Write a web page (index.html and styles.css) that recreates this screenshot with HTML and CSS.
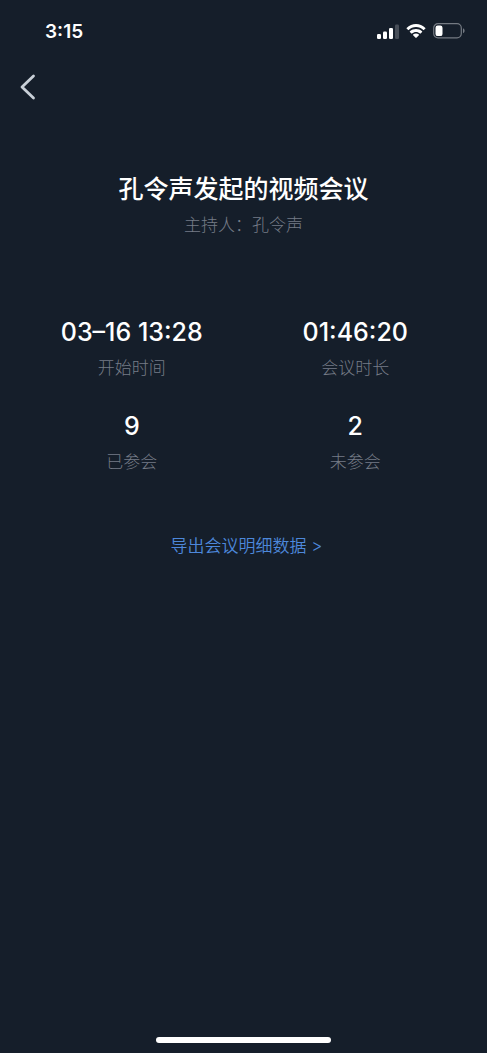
FILE: index.html
```html
<!DOCTYPE html>
<html lang="zh-CN">
<head>
<meta charset="utf-8">
<meta name="viewport" content="width=device-width, initial-scale=1">
<title>孔令声发起的视频会议</title>
<link rel="stylesheet" href="styles.css">
</head>
<body>
<div class="screen">
  <header class="status-bar">
    <time class="clock">3:15</time>
    <div class="status-icons">
      <svg class="icon-signal" viewBox="0 0 22 15" aria-hidden="true">
        <rect x="0" y="10" width="4" height="5" rx="1.2"/>
        <rect x="6" y="7.500" width="4" height="7.500" rx="1.2"/>
        <rect x="12" y="4" width="4" height="11" rx="1.2"/>
        <rect class="dim" x="18" y="0.5" width="4" height="14.5" rx="1.2"/>
      </svg>
      <svg class="icon-wifi" viewBox="0 0 20 15" aria-hidden="true">
        <path d="M10 3.1c2.8 0 5.400 1.100 7.300 3 .2.200.4.200.6 0l1.500-1.500c.2-.2.2-.5 0-.7C14.200-1.200 5.800-1.200.600 3.900c-.2.200-.2.500 0 .7l1.500 1.500c.2.200.4.200.6 0 1.900-1.900 4.500-3 7.300-3z"/>
        <path d="M10 7.900c1.500 0 2.900.6 4 1.600.2.200.4.200.6 0l1.500-1.500c.2-.2.2-.5 0-.7-3.400-3.200-8.800-3.200-12.200 0-.2.200-.2.500 0 .7l1.500 1.500c.2.200.4.200.6 0 1.100-1 2.500-1.600 4-1.600z"/>
        <path d="M12.900 11.200c.2-.2.2-.5 0-.6-1.700-1.500-4.100-1.500-5.800 0-.2.100-.2.400 0 .6l2.500 2.600c.2.200.6.200.8 0z"/>
      </svg>
      <svg class="icon-battery" viewBox="0 0 32 16" aria-hidden="true">
        <rect class="shell" x="0.7" y="0.7" width="27.600" height="14.200" rx="4.300"/>
        <rect x="2.500" y="2.500" width="7" height="10.600" rx="2.200"/>
        <path class="cap" d="M30 5.300c1 .4 1.600 1.400 1.600 2.500S31 9.900 30 10.300z"/>
      </svg>
    </div>
  </header>

  <nav class="nav-bar">
    <button class="back" type="button" aria-label="返回">
      <svg class="icon-back" viewBox="0 0 16 26" aria-hidden="true"><path d="M13.500 2L2 13l11.500 11"/></svg>
    </button>
  </nav>

  <main class="content">
    <h1 class="title">孔令声发起的视频会议</h1>
    <p class="host">主持人：孔令声</p>
    <dl class="stats">
      <div class="stat"><dt class="label">开始时间</dt><dd class="value">03–16 13:28</dd></div>
      <div class="stat"><dt class="label">会议时长</dt><dd class="value">01:46:20</dd></div>
      <div class="stat"><dt class="label">已参会</dt><dd class="value">9</dd></div>
      <div class="stat"><dt class="label">未参会</dt><dd class="value">2</dd></div>
    </dl>
    <a class="export" href="#">导出会议明细数据 &gt;</a>
  </main>

  <footer class="home-area"><div class="home-indicator"></div></footer>
</div>
</body>
</html>
```
FILE: styles.css
```css
* {
  box-sizing: border-box;
}

body {
  margin: 0;
  background: #151e2a;
  color: #fff;
  font-family: Inter, "Noto Sans CJK SC", sans-serif;
}

.screen {
  display: flex;
  flex-direction: column;
  min-height: 100vh;
}

.status-bar {
  display: flex;
  align-items: center;
  justify-content: space-between;
  height: 62px;
  padding: 0 22px 0 45px;
}

.clock {
  font-size: 19px;
  font-weight: 600;
}

.status-icons {
  display: flex;
  align-items: center;
  gap: 7px;
  fill: #fff;
}

.icon-signal {
  width: 22px;
  height: 15px;
}

.icon-wifi {
  width: 20px;
  height: 15px;
}

.icon-battery {
  width: 32px;
  height: 16px;
}

.dim {
  fill: #474e58;
}

.shell {
  fill: none;
  stroke: #747a82;
  stroke-width: 1.2;
}

.cap {
  fill: #747a82;
}

.nav-bar {
  display: flex;
  align-items: center;
  height: 50px;
  padding: 0 12px;
}

.back {
  display: flex;
  padding: 8px;
  border: 0;
  background: none;
  cursor: pointer;
}

.icon-back {
  width: 16px;
  height: 26px;
  fill: none;
  stroke: #c9d0d8;
  stroke-width: 2.8;
  stroke-linecap: round;
  stroke-linejoin: round;
}

.content {
  display: flex;
  flex: 1;
  flex-direction: column;
  align-items: center;
  padding: 59px 20px 0;
}

.title {
  margin: 0;
  font-size: 25px;
  font-weight: 500;
  line-height: 36px;
}

.host {
  margin: 5px 0 0;
  color: #757c87;
  font-size: 17px;
  font-weight: 300;
  line-height: 26px;
}

.stats {
  display: grid;
  grid-template-columns: 1fr 1fr;
  row-gap: 27px;
  width: 100%;
  margin: 76px 0 0;
}

.stat {
  display: flex;
  flex-direction: column-reverse;
  align-items: center;
  gap: 5px;
}

.label {
  color: #757c87;
  font-size: 17px;
  font-weight: 300;
  line-height: 26px;
}

.value {
  margin: 0;
  font-size: 25px;
  font-weight: 500;
  line-height: 36px;
}

.export {
  margin-top: 58px;
  padding-left: 6px;
  color: #4d88db;
  font-size: 17px;
  font-weight: 350;
  line-height: 26px;
  text-decoration: none;
}

.home-area {
  display: flex;
  justify-content: center;
  padding-bottom: 10px;
}

.home-indicator {
  width: 36%;
  height: 6px;
  border-radius: 3px;
  background: #fff;
}
```
